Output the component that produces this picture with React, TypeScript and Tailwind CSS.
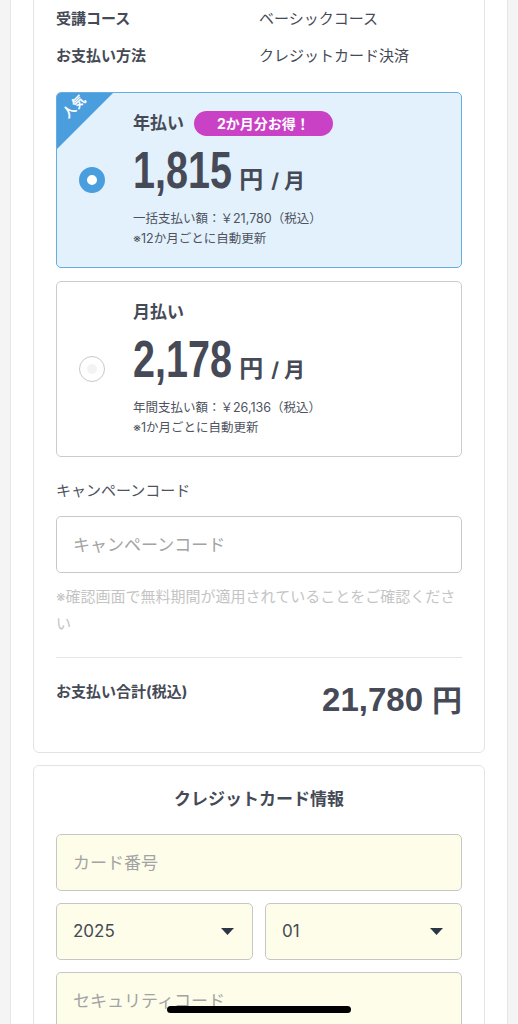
import React from "react";

const jp = "font-['Inter','Noto_Sans_CJK_JP',sans-serif]";

interface PlanProps {
  label: string;
  price: string;
  lines: string[];
  selected: boolean;
  popular?: boolean;
  badge?: string;
}

function PlanCard({ label, price, lines, selected, popular, badge }: PlanProps) {
  return (
    <div
      className={`relative overflow-hidden rounded-[5px] border h-[176px] flex items-center pl-[22px] ${
        selected ? "border-[#68ade0] bg-[#e3f1fc]" : "border-[#c9cccf] bg-white"
      }`}
    >
      {popular && (
        <>
          <div className="absolute top-0 left-0 w-[56px] h-[56px] bg-[#4a9ede] [clip-path:polygon(0_0,100%_0,0_100%)]" />
          <span className="absolute left-[4px] top-[7px] -rotate-45 text-white text-[13px] font-bold leading-none">
            人気
          </span>
        </>
      )}

      {/* Radio */}
      {selected ? (
        <span className="w-[26px] h-[26px] rounded-full border-[8px] border-[#4a9ede] bg-white shrink-0" />
      ) : (
        <span className="w-[26px] h-[26px] rounded-full border-[1.5px] border-[#c8c8c8] bg-white shrink-0 flex items-center justify-center">
          <span className="w-[10px] h-[10px] rounded-full bg-[#f3f3f3]" />
        </span>
      )}

      <div className="ml-[28px] flex flex-col">
        <div className="flex items-center h-[25px] gap-[10px]">
          <span className="text-[17px] font-bold text-[#454a56]">{label}</span>
          {badge && (
            <span className="h-[25px] px-[23px] rounded-full bg-[#c942c6] text-white text-[14px] font-bold flex items-center">
              {badge}
            </span>
          )}
        </div>
        <div className="flex items-baseline mt-[8px] leading-none text-[#454a56]">
          <span className="inline-block origin-left scale-x-[0.76] mr-[-31px] font-['Liberation_Sans',sans-serif] text-[52px] font-bold leading-none">
            {price}
          </span>
          <span className="ml-[7px] text-[24px] font-bold leading-none">円</span>
          <span className="ml-[8px] text-[20px] font-bold leading-none">/</span>
          <span className="ml-[5px] text-[21px] font-bold leading-none">月</span>
        </div>
        <div className="mt-[13px] text-[12.5px] leading-[20px] text-[#4e535e]">
          {lines.map((l) => (
            <p key={l}>{l}</p>
          ))}
        </div>
      </div>
    </div>
  );
}

function Caret() {
  return (
    <svg width="13" height="7" viewBox="0 0 13 7" className="shrink-0">
      <path d="M0 0 L13 0 L6.5 7 Z" fill="#2d3646" />
    </svg>
  );
}

const fieldClass =
  "w-full h-[57px] rounded-[5px] border-[1.5px] border-[#c6c6c6] bg-[#fefde9] px-[16px] text-[17px] placeholder:text-[#a3a3a3] outline-none";

export default function App() {
  return (
    <div className={`${jp} min-h-screen bg-[#f4f4f4] overflow-hidden`}>
      <div className="mx-[10px] bg-white border-x border-[#e6e6e6] px-[22px] pb-[80px] min-h-[1024px]">
        {/* Order summary card */}
        <div className="-mt-[20px] border border-[#e3e3e3] rounded-[6px] px-[22px] pt-[28px] pb-[32px]">
          <div className="flex flex-col gap-[17px] text-[15px] leading-[20px] text-[#454a56]">
            <div className="flex">
              <span className="w-[203px] font-bold">受講コース</span>
              <span>ベーシックコース</span>
            </div>
            <div className="flex">
              <span className="w-[203px] font-bold">お支払い方法</span>
              <span>クレジットカード決済</span>
            </div>
          </div>

          <div className="mt-[26px] flex flex-col gap-[13px]">
            <PlanCard
              label="年払い"
              badge="2か月分お得！"
              price="1,815"
              lines={["一括支払い額：￥21,780（税込）", "※12か月ごとに自動更新"]}
              selected
              popular
            />
            <PlanCard
              label="月払い"
              price="2,178"
              lines={["年間支払い額：￥26,136（税込）", "※1か月ごとに自動更新"]}
              selected={false}
            />
          </div>

          <p className="mt-[24px] text-[15px] leading-[20px] text-[#4e535e]">キャンペーンコード</p>
          <input
            placeholder="キャンペーンコード"
            className="mt-[15px] w-full h-[57px] rounded-[5px] border-[1.5px] border-[#c9c9c9] px-[16px] text-[17px] placeholder:text-[#a3a3a3] outline-none bg-white"
          />
          <p className="mt-[10px] text-[15px] leading-[27px] text-[#c4c4c4]">
            ※確認画面で無料期間が適用されていることをご確認ください
          </p>

          <div className="mt-[20px] border-t border-[#e6e6e6]" />

          <div className="mt-[22px] flex items-center justify-between text-[#454a56]">
            <span className="mb-[16px] text-[15px] font-bold">お支払い合計(税込)</span>
            <span className="flex items-baseline font-bold leading-[40px]">
              <span className="font-['Liberation_Sans',sans-serif] text-[33px]">21,780</span>
              <span className="ml-[9px] text-[30px]">円</span>
            </span>
          </div>
        </div>

        {/* Credit card card */}
        <div className="mt-[12px] border border-[#e3e3e3] rounded-[6px] px-[22px] pt-[22px] pb-[30px]">
          <h2 className="text-center text-[17px] font-bold leading-[22px] text-[#454a56]">クレジットカード情報</h2>
          <div className="mt-[24px] flex flex-col gap-[12px]">
            <input placeholder="カード番号" className={`${fieldClass} h-[56px]`} />
            <div className="grid grid-cols-2 gap-[12px]">
              <div className="h-[57px] rounded-[5px] border-[1.5px] border-[#c6c6c6] bg-[#fefde9] pl-[16px] pr-[18px] flex items-center justify-between text-[17px] text-[#454a56]">
                <span>2025</span>
                <Caret />
              </div>
              <div className="h-[57px] rounded-[5px] border-[1.5px] border-[#c6c6c6] bg-[#fefde9] pl-[16px] pr-[18px] flex items-center justify-between text-[17px] text-[#454a56]">
                <span>01</span>
                <Caret />
              </div>
            </div>
            <input placeholder="セキュリティコード" className={fieldClass} />
          </div>
        </div>
      </div>

      {/* Home indicator */}
      <div className="fixed bottom-[11px] left-1/2 -translate-x-1/2 w-[184px] h-[7px] rounded-full bg-black" />
    </div>
  );
}
